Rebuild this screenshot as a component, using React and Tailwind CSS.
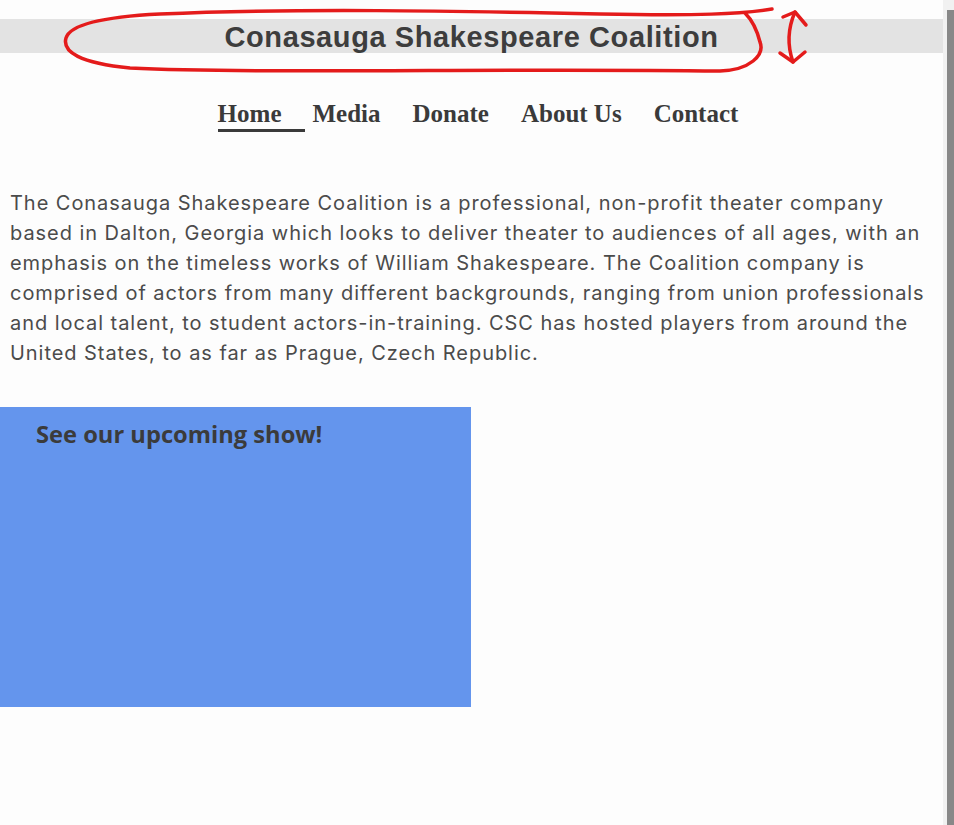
export default function App() {
  const links = ['Media', 'Donate', 'About Us', 'Contact']

  return (
    <div className="flex min-h-screen bg-[#fdfdfd]">
      <div className="relative flex-1">
        {/* Header */}
        <header className="pt-[19px]">
          <div className="h-[34px] bg-[#e3e3e3] text-center">
            <h1 className="pt-[1px] text-[29px] leading-[34px] tracking-[0.6px] font-bold text-[#3d3d3d] font-['Liberation_Sans',Arial,sans-serif]">
              Conasauga Shakespeare Coalition
            </h1>
          </div>
        </header>

        {/* Nav */}
        <nav className="mt-[46px] pl-[13px] flex justify-center font-['Liberation_Serif','Times_New_Roman',serif] text-[25px] leading-[30px] font-bold text-[#3a3a3a]">
          <a className="pr-[24px] mr-[7px] border-b-[3px] border-[#3a3a3a]">Home</a>
          <div className="flex gap-[32px]">
            {links.map((l) => (
              <a key={l}>{l}</a>
            ))}
          </div>
        </nav>

        {/* About */}
        <p className="mt-[56px] pl-[10px] pr-[8px] text-[20px] leading-[30px] tracking-[0.95px] text-[#4b4b4b] font-['Inter',sans-serif]">
          The Conasauga Shakespeare Coalition is a professional, non-profit theater company based in Dalton, Georgia which looks to deliver theater to audiences of all ages, with an emphasis on the timeless works of William Shakespeare. The Coalition company is comprised of actors from many different backgrounds, ranging from union professionals and local talent, to student actors-in-training. CSC has hosted players from around the United States, to as far as Prague, Czech Republic.
        </p>

        {/* Upcoming show */}
        <section className="mt-[39px] w-[471px] h-[300px] bg-[#6495ed] pt-[12px] pl-[36px]">
          <h2 className="text-[23.7px] leading-[30px] font-bold text-[#3b3b3b] font-['Open_Sans',sans-serif]">
            See our upcoming show!
          </h2>
        </section>

        {/* red markup */}
        <svg
          className="absolute left-0 top-0 pointer-events-none"
          width="943"
          height="90"
          viewBox="0 0 943 90"
          fill="none"
          stroke="#e41b1b"
          strokeWidth="3.5"
          strokeLinecap="round"
          strokeLinejoin="round"
        >
          <path d="M772 9 C740 14 700 16 600 14 C450 11 300 8 160 14 C100 17 70 25 66 38 C62 52 80 63 130 68 C250 74 500 68 720 71 C750 70 765 55 760 42 C757 30 752 20 745 13" />
          <path d="M783 17 L795 12 L806 25" />
          <path d="M795 12 C788 28 787 45 793 62" />
          <path d="M780 53 L793 62 L805 52" />
        </svg>
      </div>

      {/* scrollbar */}
      <div className="w-[11px] bg-[#f1f1f1] flex flex-col">
        <div className="ml-[4px] mt-[10px] flex-1 bg-[#888888]" />
      </div>
    </div>
  )
}
